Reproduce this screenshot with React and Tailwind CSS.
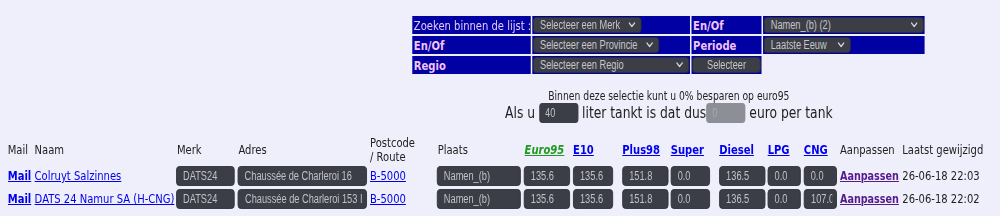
import React from 'react';

const sans = "font-['DejaVu_Sans',Verdana,sans-serif]";
const arial = "font-['Liberation_Sans',Arial,sans-serif]";

function Chevron() {
  return (
    <svg width="9" height="6" viewBox="0 0 9 6" fill="none" className="flex-shrink-0">
      <polyline points="1,1 4.5,4.5 8,1" stroke="#d6d6da" strokeWidth="1.6" strokeLinecap="round" strokeLinejoin="round" />
    </svg>
  );
}

function Sel({ text, w = 'w-fit', gap = 'gap-[9px]' }) {
  return (
    <div
      className={`${w} h-[16px] flex items-center justify-between ${gap} rounded-[4px] border border-[#2b2e35] bg-[#3b3e46] pl-[8px] pr-[7px] text-[12px] leading-[14px] text-[#c6c6ca] whitespace-nowrap ${arial}`}
    >
      <span>{text}</span>
      <Chevron />
    </div>
  );
}

function Cell({ children, w, bold, light }) {
  return (
    <div
      className={`${w} h-[18px] flex items-center p-[1px] bg-[#0000a3] text-[13px] leading-none whitespace-nowrap ${
        bold ? 'font-bold text-[#f4c4f6]' : 'text-[#e6c8fa]'
      } ${light ? 'pl-[2px]' : ''}`}
    >
      {children}
    </div>
  );
}

function Field({ value, w }) {
  return (
    <input
      readOnly
      value={value}
      className={`${w} h-[20px] rounded-[4px] border border-[#2e3137] bg-[#3b3e46] pl-[8px] pr-[5px] text-[12px] text-[#c2c2c6] outline-none ${arial}`}
    />
  );
}

const cols =
  'grid grid-cols-[35px_184px_80px_172px_87px_113px_64px_64px_63px_63px_63px_47px_47px_81px_117px]';

const rows = [
  {
    naam: 'Colruyt Salzinnes',
    adres: 'Chaussée de Charleroi 16',
    prices: ['135.6', '135.6', '151.8', '0.0', '136.5', '0.0', '0.0'],
    date: '26-06-18 22:03',
  },
  {
    naam: 'DATS 24 Namur SA (H-CNG)',
    adres: 'Chaussée de Charleroi 153 Ib',
    prices: ['135.6', '135.6', '151.8', '0.0', '136.5', '0.0', '107.0'],
    date: '26-06-18 22:02',
  },
];

const priceW = ['w-[60px]', 'w-[52px]', 'w-[60px]', 'w-[51px]', 'w-[60px]', 'w-[43px]', 'w-[43px]'];

export default function App() {
  return (
    <div className={`w-[1000px] h-[216px] overflow-hidden bg-[#efeefb] text-[#222] ${sans}`}>
      <div className="w-[1300px] origin-top-left scale-x-[0.7692] pt-[16px]">
        {/* Search form */}
        <div className="ml-[536px] w-[667px]">
          <div className="flex flex-col gap-[2px]">
            <div className="flex gap-[2px]">
              <Cell w="w-[154px]" light>Zoeken binnen de lijst :</Cell>
              <Cell w="w-[205px]"><Sel text="Selecteer een Merk" gap="gap-[11px]" /></Cell>
              <Cell w="w-[91px]" bold light>En/Of</Cell>
              <Cell w="w-[210px]"><Sel text="Namen_(b) (2)" w="w-full" /></Cell>
            </div>
            <div className="flex gap-[2px]">
              <Cell w="w-[154px]" bold light>En/Of</Cell>
              <Cell w="w-[205px]"><Sel text="Selecteer een Provincie" gap="gap-[11px]" /></Cell>
              <Cell w="w-[91px]" bold light>Periode</Cell>
              <Cell w="w-[210px]"><Sel text="Laatste Eeuw" gap="gap-[14px]" /></Cell>
            </div>
            <div className="flex gap-[2px]">
              <Cell w="w-[154px]" bold light>Regio</Cell>
              <Cell w="w-[205px]"><Sel text="Selecteer een Regio" w="w-full" /></Cell>
              <Cell w="w-[91px]">
                <button
                  className={`w-full h-[16px] rounded-[4px] border border-[#2b2e35] bg-[#3b3e46] text-[12px] leading-none text-[#c6c6ca] ${arial}`}
                >
                  Selecteer
                </button>
              </Cell>
            </div>
          </div>

          <div className="mt-[15px] text-center text-[12px] leading-[14px]">
            Binnen deze selectie kunt u 0% besparen op euro95
          </div>
          <div className="h-[20px] flex items-center justify-center text-[16px] leading-none whitespace-pre">
            <span>Als u </span>
            <input
              readOnly
              value="40"
              className={`w-[51px] h-[20px] rounded-[4px] bg-[#3b3e46] pl-[8px] text-[12px] text-[#c4c4c8] outline-none ${arial}`}
            />
            <span> liter tankt is dat dus</span>
            <input
              readOnly
              value="0"
              className={`w-[51px] h-[20px] rounded-[4px] bg-[#8d8f97] pl-[8px] text-[12px] text-[#a9abb2] outline-none ${arial}`}
            />
            <span> euro per tank</span>
          </div>
        </div>

        {/* Results */}
        <div className="ml-[10px] mt-[12px] text-[13px]">
          <div className={`${cols} h-[30px] items-center leading-[14px]`}>
            <span>Mail</span>
            <span>Naam</span>
            <span className="pl-[1px]">Merk</span>
            <span className="pl-[1px]">Adres</span>
            <span>
              Postcode
              <br />/ Route
            </span>
            <span className="pl-[1px]">Plaats</span>
            <a className="pl-[1px] font-bold italic underline text-[#1f9a1f]">Euro95</a>
            <a className="font-bold underline text-[#0000ee]">E10</a>
            <a className="font-bold underline text-[#0000ee]">Plus98</a>
            <a className="font-bold underline text-[#0000ee]">Super</a>
            <a className="font-bold underline text-[#0000ee]">Diesel</a>
            <a className="font-bold underline text-[#0000ee]">LPG</a>
            <a className="font-bold underline text-[#0000ee]">CNG</a>
            <span>Aanpassen</span>
            <span className="whitespace-nowrap">Laatst gewijzigd</span>
          </div>

          {rows.map((r, i) => (
            <div key={i} className={`${cols} h-[20px] items-center ${i === 0 ? 'mt-[1px]' : 'mt-[3px]'}`}>
              <a className="font-bold underline text-[#0000ee]">Mail</a>
              <a className="underline text-[#0000ee] whitespace-nowrap">{r.naam}</a>
              <Field value="DATS24" w="w-[76px]" />
              <Field value={r.adres} w="w-[168px]" />
              <a className="underline text-[#0000ee]">B-5000</a>
              <Field value="Namen_(b)" w="w-[109px]" />
              {r.prices.map((p, j) => (
                <Field key={j} value={p} w={priceW[j]} />
              ))}
              <a className="font-bold underline text-[12.5px] whitespace-nowrap text-[#551a8b]">Aanpassen</a>
              <span className="whitespace-nowrap">{r.date}</span>
            </div>
          ))}
        </div>
      </div>
    </div>
  );
}
